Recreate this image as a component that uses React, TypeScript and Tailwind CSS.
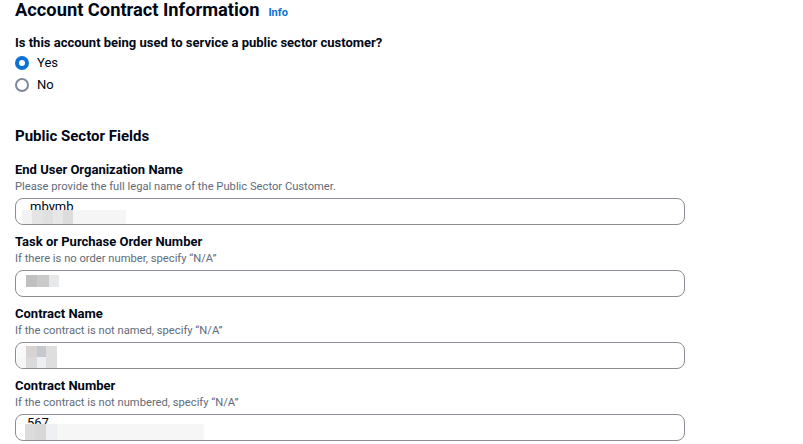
import React from 'react';

type Block = { x: number; y: number; w: number; h: number; c: string };

// redaction blocks, positioned inside the input box
const fields: { label: string; desc: string; value: string; textLeft: number; blocks: Block[] }[] = [
  {
    label: 'End User Organization Name',
    desc: 'Please provide the full legal name of the Public Sector Customer.',
    value: 'mbymb',
    textLeft: 14,
    blocks: [
      { x: 6, y: 11, w: 10, h: 16, c: '#f2f2f2' },
      { x: 16, y: 11, w: 11, h: 16, c: '#e4e4e4' },
      { x: 27, y: 11, w: 10, h: 16, c: '#e0e0e0' },
      { x: 37, y: 11, w: 10, h: 16, c: '#e7e7e7' },
      { x: 47, y: 11, w: 10, h: 16, c: '#dcdcdc' },
      { x: 57, y: 11, w: 53, h: 16, c: '#f5f5f5' },
    ],
  },
  {
    label: 'Task or Purchase Order Number',
    desc: 'If there is no order number, specify “N/A”',
    value: 'y',
    textLeft: 24,
    blocks: [
      { x: 10, y: 4, w: 11, h: 12, c: '#c0c0c0' },
      { x: 21, y: 4, w: 12, h: 12, c: '#cacaca' },
      { x: 33, y: 4, w: 10, h: 12, c: '#e6e8ea' },
    ],
  },
  {
    label: 'Contract Name',
    desc: 'If the contract is not named, specify “N/A”',
    value: '',
    textLeft: 14,
    blocks: [
      { x: 1, y: 3, w: 9, h: 11, c: '#f9f9f9' },
      { x: 10, y: 3, w: 11, h: 11, c: '#d6d3d2' },
      { x: 21, y: 3, w: 9, h: 11, c: '#c5c8cc' },
      { x: 30, y: 3, w: 11, h: 11, c: '#dedede' },
      { x: 1, y: 14, w: 9, h: 11, c: '#f6f6f6' },
      { x: 10, y: 14, w: 11, h: 11, c: '#dadada' },
      { x: 21, y: 14, w: 9, h: 11, c: '#eeeff1' },
      { x: 30, y: 14, w: 11, h: 11, c: '#dedede' },
    ],
  },
  {
    label: 'Contract Number',
    desc: 'If the contract is not numbered, specify “N/A”',
    value: '567',
    textLeft: 11,
    blocks: [
      { x: 9, y: 9, w: 10, h: 17, c: '#dcdcdc' },
      { x: 19, y: 9, w: 11, h: 17, c: '#d8d8d8' },
      { x: 30, y: 9, w: 11, h: 17, c: '#eef0f3' },
      { x: 41, y: 9, w: 147, h: 17, c: '#f6f6f6' },
    ],
  },
];

const Radio: React.FC<{ checked: boolean; label: string }> = ({ checked, label }) => (
  <label className="flex items-center h-[22px] gap-2">
    <span
      className={`w-[14px] h-[14px] rounded-full box-border ${
        checked ? 'border-[4px] border-[#0972d3] bg-white' : 'border-2 border-[#7d8998] bg-white'
      }`}
    />
    <span className="text-[13px] text-[#000716]">{label}</span>
  </label>
);

export default function App() {
  return (
    <div className="w-[803px] h-[444px] bg-white overflow-hidden px-[15px] text-[#000716]" style={{ fontFamily: 'Roboto, "Liberation Sans", sans-serif' }}>
      <div className="flex items-baseline gap-[9px] -mt-[2px]">
        <h1 className="text-[18.3px] font-bold leading-[24px]">Account Contract Information</h1>
        <a className="text-[11px] font-bold text-[#0972d3]">Info</a>
      </div>

      <div className="mt-[12px] text-[13px] font-bold leading-[18px]">
        Is this account being used to service a public sector customer?
      </div>
      <div className="flex flex-col">
        <Radio checked label="Yes" />
        <Radio checked={false} label="No" />
      </div>

      <h2 className="mt-[29px] text-[15px] font-bold leading-[22px]">Public Sector Fields</h2>

      <div className="mt-[14px] flex flex-col gap-[8px]">
        {fields.map((f) => (
          <div key={f.label} className="w-[670px]">
            <div className="text-[13px] font-bold leading-[18px]">{f.label}</div>
            <div className="text-[11.2px] leading-[15px] text-[#5f6b7a]">{f.desc}</div>
            <div className="relative mt-[4px] h-[27px] rounded-[8px] border border-[#8c8c94] overflow-hidden">
              <span className="absolute top-[-2px] text-[13px] text-[#000716]" style={{ left: f.textLeft }}>
                {f.value}
              </span>
              {f.blocks.map((b, i) => (
                <div
                  key={i}
                  className="absolute"
                  style={{ left: b.x, top: b.y, width: b.w, height: b.h, backgroundColor: b.c }}
                />
              ))}
            </div>
          </div>
        ))}
      </div>
    </div>
  );
}
